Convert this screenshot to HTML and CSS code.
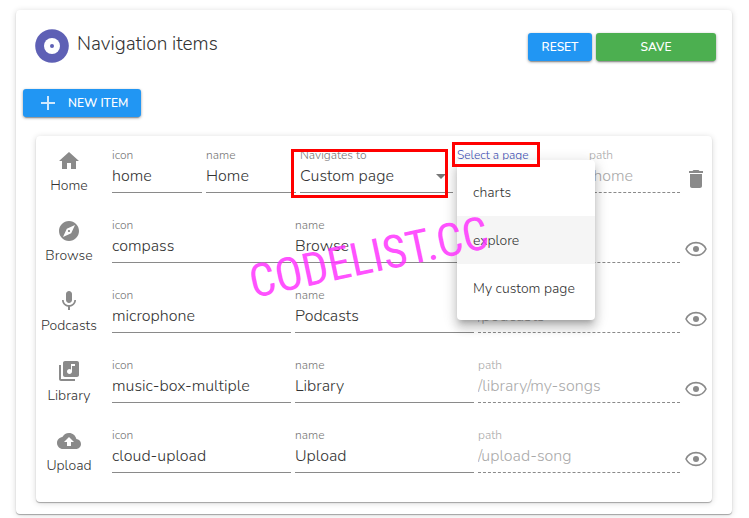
FILE: index.html
```html
<!DOCTYPE html>
<html lang="en">
<head>
<meta charset="utf-8">
<title>Navigation items</title>
<link rel="stylesheet" href="styles.css">
</head>
<body>
<main class="panel">
  <header class="panel-head">
    <svg class="logo" viewBox="0 0 34 34" aria-hidden="true"><circle cx="17" cy="17" r="16.800" fill="#5e60b5"/><circle cx="17" cy="17" r="8" fill="#fff"/><circle cx="17" cy="17" r="2" fill="#5e60b5"/></svg>
    <h1 class="title">Navigation items</h1>
    <button class="btn blue reset" type="button">RESET</button>
    <button class="btn green save" type="button">SAVE</button>
  </header>
  <button class="btn blue new-item" type="button"><svg width="16" height="16" viewBox="0 0 16 16" aria-hidden="true"><path d="M8 1v14M1 8h14" stroke="#cfe8fd" stroke-width="2" fill="none"/></svg>NEW ITEM</button>

  <section class="items">
    <div class="row">
      <div class="preview"><svg class="icon" viewBox="0 0 24 24" aria-hidden="true"><path d="M10 20v-6h4v6h5v-8h3L12 3 2 12h3v8z"/></svg><span>Home</span></div>
      <div class="fields custom">
        <div class="field"><label for="i1">icon</label><input id="i1" value="home"></div>
        <div class="field"><label for="n1">name</label><input id="n1" value="Home"></div>
        <div class="field"><label for="t1">Navigates to</label><select id="t1"><option>Custom page</option></select><svg class="arrow" viewBox="0 0 10 5" aria-hidden="true"><path d="M0 0h10L5 5z"/></svg><div class="mark mark-target"></div></div>
        <div class="field active"><label for="s1">Select a page</label><select id="s1"><option></option></select>
          <ul class="menu" role="listbox" aria-label="Select a page"><li role="option">charts</li><li class="hover" role="option">explore</li><li role="option">My custom page</li></ul>
          <div class="mark mark-page"></div>
        </div>
        <div class="field disabled"><label for="p1">path</label><input id="p1" value="/home" disabled></div>
      </div>
      <button class="action" type="button" aria-label="Delete"><svg class="icon" viewBox="0 0 24 24" aria-hidden="true"><path d="M6 19c0 1.100.9 2 2 2h8c1.100 0 2-.9 2-2V7H6zM19 4h-3.500l-1-1h-5l-1 1H5v2h14z"/></svg></button>
    </div>
    <div class="row">
      <div class="preview"><svg class="icon" viewBox="0 0 24 24" aria-hidden="true"><path d="M12 10.900c-.61 0-1.100.49-1.100 1.100s.49 1.100 1.100 1.100 1.100-.49 1.100-1.100-.49-1.100-1.100-1.100zM12 2C6.480 2 2 6.480 2 12s4.480 10 10 10 10-4.480 10-10S17.520 2 12 2zm2.190 12.190L6 18l3.810-8.190L18 6z"/></svg><span>Browse</span></div>
      <div class="fields">
        <div class="field"><label for="i2">icon</label><input id="i2" value="compass"></div>
        <div class="field"><label for="n2">name</label><input id="n2" value="Browse"></div>
        <div class="field disabled"><label for="p2">path</label><input id="p2" value="/browse" disabled></div>
      </div>
      <button class="action" type="button" aria-label="Toggle visibility"><svg class="icon eye" viewBox="0 0 24 24" aria-hidden="true"><path d="M2 12C6 3.500 18 3.500 22 12C18 20.500 6 20.500 2 12z" fill="none" stroke="#8a8a8a" stroke-width="1.600"/><circle cx="12" cy="12" r="3"/></svg></button>
    </div>
    <div class="row">
      <div class="preview"><svg class="icon" viewBox="0 0 24 24" aria-hidden="true"><path d="M12 14c1.660 0 3-1.340 3-3V5c0-1.660-1.340-3-3-3S9 3.340 9 5v6c0 1.660 1.340 3 3 3zm5.300-3c0 3-2.540 5.100-5.300 5.100S6.700 14 6.700 11H5c0 3.410 2.720 6.230 6 6.720V21h2v-3.280c3.280-.48 6-3.300 6-6.720z"/></svg><span>Podcasts</span></div>
      <div class="fields">
        <div class="field"><label for="i3">icon</label><input id="i3" value="microphone"></div>
        <div class="field"><label for="n3">name</label><input id="n3" value="Podcasts"></div>
        <div class="field disabled"><label for="p3">path</label><input id="p3" value="/podcasts" disabled></div>
      </div>
      <button class="action" type="button" aria-label="Toggle visibility"><svg class="icon eye" viewBox="0 0 24 24" aria-hidden="true"><path d="M2 12C6 3.500 18 3.500 22 12C18 20.500 6 20.500 2 12z" fill="none" stroke="#8a8a8a" stroke-width="1.600"/><circle cx="12" cy="12" r="3"/></svg></button>
    </div>
    <div class="row">
      <div class="preview"><svg class="icon" viewBox="0 0 24 24" aria-hidden="true"><path d="M20 2H8c-1.100 0-2 .9-2 2v12c0 1.100.9 2 2 2h12c1.100 0 2-.9 2-2V4c0-1.100-.9-2-2-2zm-2 5h-3v5.500c0 1.380-1.120 2.500-2.500 2.500S10 13.880 10 12.500s1.120-2.500 2.500-2.500c.57 0 1.080.19 1.500.51V5h4zM4 6H2v14c0 1.100.9 2 2 2h14v-2H4z"/></svg><span>Library</span></div>
      <div class="fields">
        <div class="field"><label for="i4">icon</label><input id="i4" value="music-box-multiple"></div>
        <div class="field"><label for="n4">name</label><input id="n4" value="Library"></div>
        <div class="field disabled"><label for="p4">path</label><input id="p4" value="/library/my-songs" disabled></div>
      </div>
      <button class="action" type="button" aria-label="Toggle visibility"><svg class="icon eye" viewBox="0 0 24 24" aria-hidden="true"><path d="M2 12C6 3.500 18 3.500 22 12C18 20.500 6 20.500 2 12z" fill="none" stroke="#8a8a8a" stroke-width="1.600"/><circle cx="12" cy="12" r="3"/></svg></button>
    </div>
    <div class="row">
      <div class="preview"><svg class="icon" viewBox="0 0 24 24" aria-hidden="true"><path d="M19.350 10.040C18.670 6.590 15.640 4 12 4 9.110 4 6.600 5.640 5.350 8.040 2.340 8.360 0 10.910 0 14c0 3.310 2.690 6 6 6h13c2.760 0 5-2.240 5-5 0-2.640-2.050-4.780-4.650-4.960zM14 13v4h-4v-4H7l5-5 5 5z"/></svg><span>Upload</span></div>
      <div class="fields">
        <div class="field"><label for="i5">icon</label><input id="i5" value="cloud-upload"></div>
        <div class="field"><label for="n5">name</label><input id="n5" value="Upload"></div>
        <div class="field disabled"><label for="p5">path</label><input id="p5" value="/upload-song" disabled></div>
      </div>
      <button class="action" type="button" aria-label="Toggle visibility"><svg class="icon eye" viewBox="0 0 24 24" aria-hidden="true"><path d="M2 12C6 3.500 18 3.500 22 12C18 20.500 6 20.500 2 12z" fill="none" stroke="#8a8a8a" stroke-width="1.600"/><circle cx="12" cy="12" r="3"/></svg></button>
    </div>
    <div class="watermark">CODELIST.CC</div>
  </section>
</main>
</body>
</html>
```
FILE: styles.css
```css
* { box-sizing: border-box; }
html { background: #fff; }
body {
  margin: 0;
  padding: 10px 17px 4px 16px;
  color: #333;
  font-family: Nunito, "Open Sans", sans-serif;
  font-weight: 300;
}
button, input, select { font: inherit; color: inherit; }
.panel, .items {
  position: relative;
  border-radius: 4px;
  background: #fff;
  box-shadow: 0 1px 1px rgba(0,0,0,.3), 0 1px 6px rgba(0,0,0,.16);
}
.panel { padding: 19px 16px 12px 7px; }
.panel-head { display: flex; align-items: center; gap: 4px; margin-left: 12px; }
.logo { width: 34px; height: 34px; flex: none; }
.title { flex: 1; margin: 0 0 4px 4px; font-size: 19px; line-height: 24px; font-weight: 300; }
.btn {
  height: 28px;
  padding: 0;
  border: 0;
  border-radius: 3px;
  color: #fff;
  font-size: 12px;
  font-weight: 600;
  line-height: 28px;
  box-shadow: 0 3px 1px -2px rgba(0,0,0,.2), 0 1px 3px rgba(0,0,0,.4);
}
.blue { background: #2196f3; }
.green { background: #4caf50; }
.reset { width: 64px; }
.save { width: 120px; }
.panel-head .btn { margin-top: 2px; }
.new-item {
  display: flex;
  align-items: center;
  gap: 12px;
  margin-top: 26px;
  padding: 0 13px 0 17px;
}
.items { margin: 19px 4px 0 13px; padding: 12px 0 4px; }
.row { display: flex; height: 70px; }
.preview {
  display: flex;
  flex: 0 0 66px;
  flex-direction: column;
  align-items: center;
  margin-right: 10px;
  padding-top: 1px;
  font-size: 14px;
  line-height: 26px;
}
.icon { display: block; width: 24px; height: 24px; fill: #8a8a8a; }
.fields { display: grid; flex: 1; min-width: 0; grid-template-columns: 179fr 179fr 202fr; gap: 4px; }
.custom { grid-template-columns: 90fr 90fr 153fr 128fr 91fr; }
.field { position: relative; min-width: 0; }
.field label { display: block; height: 14px; font-size: 12px; line-height: 14px; color: #777; white-space: nowrap; }
.field input, .field select {
  display: block;
  width: 100%;
  height: 31px;
  padding: 0 0 2px;
  border: 0;
  border-bottom: 1px solid #8a8a8a;
  border-radius: 0;
  background: none;
  appearance: none;
  font-size: 16px;
}
.field.disabled label { color: #aaa; }
.field.disabled input { border-bottom-style: dashed; color: #aaa; }
.field.active label { color: #3f51b5; }
.arrow { position: absolute; top: 26px; right: 7px; width: 10px; height: 5px; fill: #777; }
.action { display: flex; flex: 0 0 32px; justify-content: center; padding: 19px 0 0; border: 0; background: none; }
.menu {
  position: absolute;
  z-index: 2;
  top: 12px;
  left: 0;
  width: 138px;
  margin: 0;
  padding: 8px 0;
  border-radius: 4px;
  background: #fff;
  list-style: none;
  box-shadow: 0 5px 5px -3px rgba(0,0,0,.2), 0 8px 10px 1px rgba(0,0,0,.14), 0 3px 14px 2px rgba(0,0,0,.12);
}
.menu li { padding: 2px 16px 0; font-size: 14px; line-height: 46px; white-space: nowrap; }
.menu .hover { background: #f5f5f5; }
.mark { position: absolute; z-index: 3; border: 3px solid #f00; pointer-events: none; }
.mark-target { top: 1px; left: -9px; right: 5px; height: 49px; }
.mark-page { top: -6px; left: -5px; width: 88px; height: 25px; }
.watermark {
  position: absolute;
  z-index: 4;
  top: 96px;
  left: 211px;
  color: rgba(255,51,255,.85);
  font: 400 46px/50px "Roboto Condensed", Roboto, sans-serif;
  transform: rotate(-12deg);
  pointer-events: none;
}
```
